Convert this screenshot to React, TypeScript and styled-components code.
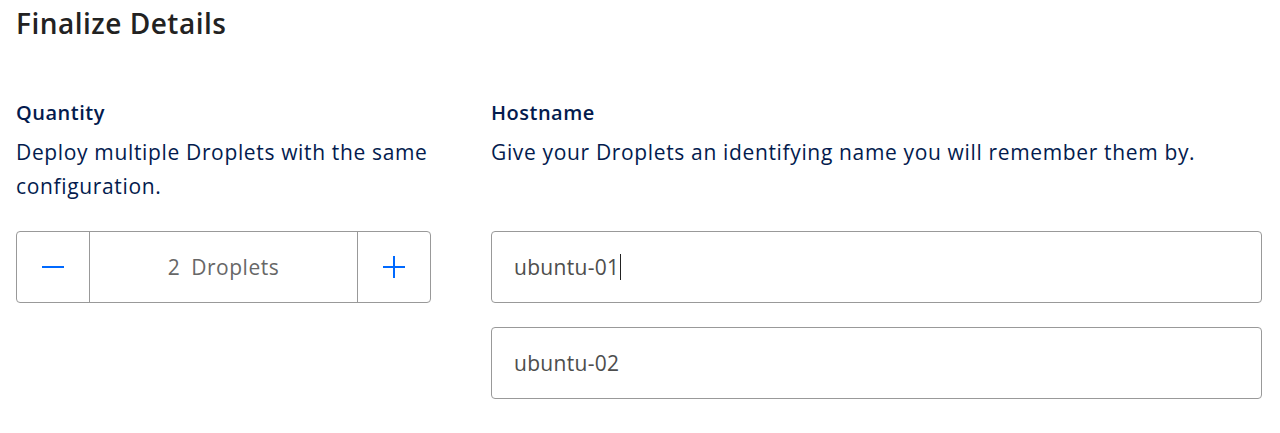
import React from "react";
import styled, { createGlobalStyle } from "styled-components";

const Global = createGlobalStyle`
  html, body { margin: 0; padding: 0; background: #fff; }
  body { font-family: "Open Sans", Lato, sans-serif; -webkit-font-smoothing: antialiased; }
  * { box-sizing: border-box; }
`;

const Page = styled.div`
  padding: 3px 18px 0 16px;
`;

const Title = styled.h2`
  margin: 0;
  font-size: 28px;
  line-height: 40px;
  font-weight: 600;
  letter-spacing: 0.5px;
  color: #222;
`;

const Columns = styled.div`
  display: grid;
  grid-template-columns: 415px 1fr;
  column-gap: 60px;
  margin-top: 56px;
`;

const Column = styled.div`
  display: flex;
  flex-direction: column;
`;

const Label = styled.h3`
  margin: 0;
  font-size: 20px;
  line-height: 28px;
  font-weight: 600;
  letter-spacing: 0.5px;
  color: #031b4e;
`;

const Desc = styled.p`
  margin: 8px 0 0;
  font-size: 21px;
  line-height: 34px;
  letter-spacing: 0.65px;
  color: #031b4e;
  min-height: 68px;
`;

const Controls = styled.div`
  margin-top: 28px;
  display: flex;
  flex-direction: column;
  gap: 24px;
`;

const Stepper = styled.div`
  display: flex;
  height: 72px;
  border: 1px solid #999;
  border-radius: 4px;
`;

const StepButton = styled.button`
  width: 73px;
  flex: none;
  display: flex;
  align-items: center;
  justify-content: center;
  background: transparent;
  border: none;
  padding: 0;
  color: #0069ff;
  cursor: pointer;
  ${(p: { $side: "left" | "right" }) =>
    p.$side === "left" ? "border-right: 1px solid #999;" : "border-left: 1px solid #999;"}
`;

const Count = styled.div`
  flex: 1;
  display: flex;
  align-items: center;
  justify-content: center;
  font-size: 21px;
  letter-spacing: 0.5px;
  color: #676767;
  word-spacing: 5px;
`;

const Input = styled.div`
  height: 72px;
  border: 1px solid #999;
  border-radius: 4px;
  display: flex;
  align-items: center;
  padding: 0 22px;
  font-size: 21px;
  letter-spacing: 0.3px;
  color: #4d4d4d;
`;

const Caret = styled.span`
  display: inline-block;
  width: 1px;
  height: 26px;
  background: #222;
  margin-left: 1px;
`;

export default function App() {
  return (
    <>
      <Global />
      <Page>
        <Title>Finalize Details</Title>
        <Columns>
          <Column>
            <Label>Quantity</Label>
            <Desc>Deploy multiple Droplets with the same configuration.</Desc>
            <Controls>
              <Stepper>
                <StepButton $side="left" aria-label="decrease">
                  <svg width="22" height="22" viewBox="0 0 22 22">
                    <path d="M0 11h22" stroke="currentColor" strokeWidth="2" />
                  </svg>
                </StepButton>
                <Count>2 Droplets</Count>
                <StepButton $side="right" aria-label="increase">
                  <svg width="22" height="22" viewBox="0 0 22 22">
                    <path d="M0 11h22M11 0v22" stroke="currentColor" strokeWidth="2" />
                  </svg>
                </StepButton>
              </Stepper>
            </Controls>
          </Column>
          <Column>
            <Label>Hostname</Label>
            <Desc>Give your Droplets an identifying name you will remember them by.</Desc>
            <Controls>
              <Input>
                ubuntu-01
                <Caret />
              </Input>
              <Input>ubuntu-02</Input>
            </Controls>
          </Column>
        </Columns>
      </Page>
    </>
  );
}
